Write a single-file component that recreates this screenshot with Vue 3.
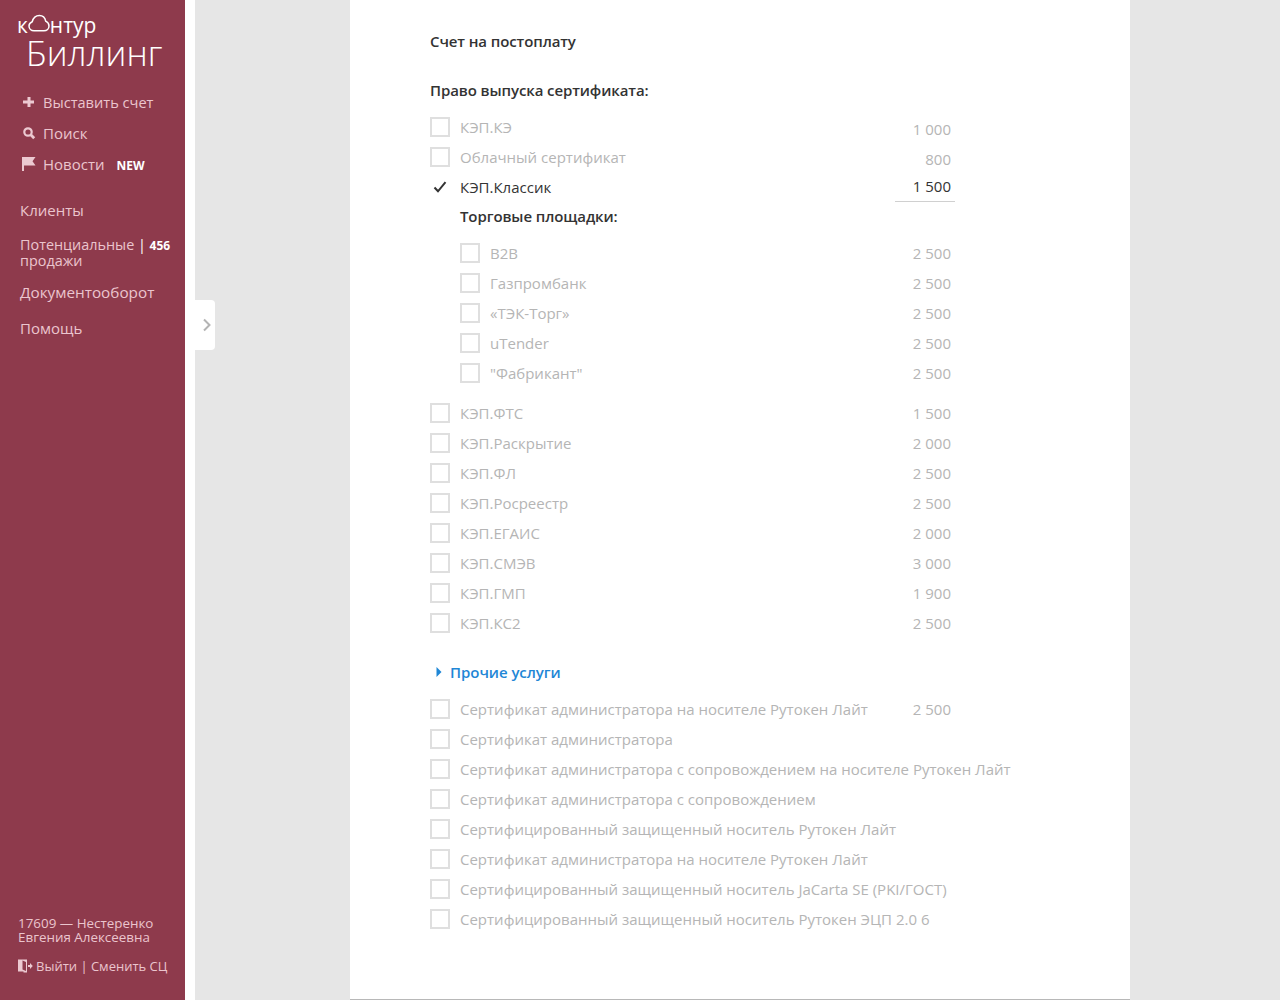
<template>
  <div class="page">
    <aside class="sidebar">
      <div class="sidebar__top">
        <div class="logo">
          <div class="logo__kontur">
            к<svg class="logo__cloud" width="22" height="18" viewBox="0 0 22 18">
              <path d="M6 16.800C3.200 16.800 1 14.700 1 12c0-1.800 1.400-3.400 3.200-4.200C4.900 5.100 7 1.500 11.400 1.500c3.400 0 5.700 2.600 6.300 5.600C19.700 8 21 9.800 21 12c0 2.700-2.200 4.800-5 4.800z" fill="none" stroke="#fff" stroke-width="1.500" />
            </svg>нтур
          </div>
          <div class="logo__product">Биллинг</div>
        </div>
        <nav class="actions">
          <a class="action action--narrow">
            <svg class="action__icon" width="14" height="14" viewBox="0 0 14 14">
              <path d="M5.500 2h3v3.500H12v3H8.500V12h-3V8.500H1v-3h4.500z" fill="#ecc9d1" />
            </svg>
            Выставить счет
          </a>
          <a class="action">
            <svg class="action__icon" width="14" height="14" viewBox="0 0 14 14">
              <circle cx="6" cy="6" r="3.700" fill="none" stroke="#ecc9d1" stroke-width="2.200" />
              <path d="M8.800 8.800l3.400 3.400" stroke="#ecc9d1" stroke-width="2.800" />
            </svg>
            Поиск
          </a>
          <a class="action">
            <svg class="action__icon" width="14" height="16" viewBox="0 0 14 16">
              <path d="M0 1h13.500l-3 4.200 3 4.300H2V15H0z" fill="#ecc9d1" />
            </svg>
            Новости <b class="action__new">NEW</b>
          </a>
        </nav>
        <nav class="menu">
          <a class="menu__item">Клиенты</a>
          <a class="menu__item menu__item--double">
            Потенциальные <span class="menu__sep">|</span> <b class="menu__count">456</b><br />продажи
          </a>
          <a class="menu__item menu__item--wide">Документооборот</a>
          <a class="menu__item menu__item--last">Помощь</a>
        </nav>
      </div>
      <div class="sidebar__bottom">
        <div class="user">17609 — Нестеренко<br />Евгения Алексеевна</div>
        <div class="logout">
          <svg width="15" height="14" viewBox="0 0 15 14">
            <path d="M0 .5h9v13H5.500v-1H0z" fill="#ecc9d1" />
            <path d="M4.500 1.500L8 3v9l-3.500-1.500z" fill="#8e3a4c" />
            <path d="M10 6h2V4l2.800 3-2.800 3V8h-2z" fill="#ecc9d1" />
          </svg>
          Выйти | Сменить СЦ
        </div>
      </div>
    </aside>

    <main class="content">
      <div class="toggle">
        <svg width="10" height="14" viewBox="0 0 10 14">
          <path d="M2 1.500L7.500 7 2 12.500" fill="none" stroke="#b4b4b4" stroke-width="2" />
        </svg>
      </div>
      <section class="sheet">
        <h2 class="sheet__title">Счет на постоплату</h2>
        <h3 class="sheet__subtitle">Право выпуска сертификата:</h3>

        <div class="list list--first">
          <div v-for="item in topItems" :key="item.name" class="row" :class="{ 'row--on': item.checked }">
            <span class="box" :class="{ 'box--on': item.checked }">
              <svg v-if="item.checked" width="14" height="12" viewBox="0 0 14 12">
                <path d="M1.500 6.500L5 10.300 12.500 1.200" fill="none" stroke="#333" stroke-width="2" />
              </svg>
            </span>
            <span class="row__name">{{ item.name }}</span>
            <span class="row__price" :class="{ 'row__price--edit': item.checked, 'row__price--low': item.low }">{{ item.price }}</span>
          </div>
        </div>

        <div class="group">
          <h4 class="group__title">Торговые площадки:</h4>
          <div v-for="item in platforms" :key="item.name" class="row">
            <span class="box"></span>
            <span class="row__name">{{ item.name }}</span>
            <span class="row__price">{{ item.price }}</span>
          </div>
        </div>

        <div class="list list--certs">
          <div v-for="item in certs" :key="item.name" class="row">
            <span class="box"></span>
            <span class="row__name">{{ item.name }}</span>
            <span class="row__price">{{ item.price }}</span>
          </div>
        </div>

        <a class="more">
          <svg width="6" height="10" viewBox="0 0 6 10"><path d="M.5 0L5.500 5 .5 10z" fill="#1f87d6" /></svg>
          Прочие услуги
        </a>

        <div class="list">
          <div v-for="(item, i) in others" :key="i" class="row">
            <span class="box"></span>
            <span class="row__name">{{ item.name }}</span>
            <span v-if="item.price" class="row__price">{{ item.price }}</span>
          </div>
        </div>
      </section>
    </main>
  </div>
</template>

<script setup>
const topItems = [
  { name: "КЭП.КЭ", price: "1 000", low: true },
  { name: "Облачный сертификат", price: "800", low: true },
  { name: "КЭП.Классик", price: "1 500", checked: true },
];

const platforms = [
  { name: "B2B", price: "2 500" },
  { name: "Газпромбанк", price: "2 500" },
  { name: "«ТЭК-Торг»", price: "2 500" },
  { name: "uTender", price: "2 500" },
  { name: '"Фабрикант"', price: "2 500" },
];

const certs = [
  { name: "КЭП.ФТС", price: "1 500" },
  { name: "КЭП.Раскрытие", price: "2 000" },
  { name: "КЭП.ФЛ", price: "2 500" },
  { name: "КЭП.Росреестр", price: "2 500" },
  { name: "КЭП.ЕГАИС", price: "2 000" },
  { name: "КЭП.СМЭВ", price: "3 000" },
  { name: "КЭП.ГМП", price: "1 900" },
  { name: "КЭП.КС2", price: "2 500" },
];

const others = [
  { name: "Сертификат администратора на носителе Рутокен Лайт", price: "2 500" },
  { name: "Сертификат администратора" },
  { name: "Сертификат администратора с сопровождением на носителе Рутокен Лайт" },
  { name: "Сертификат администратора с сопровождением" },
  { name: "Сертифицированный защищенный носитель Рутокен Лайт" },
  { name: "Сертификат администратора на носителе Рутокен Лайт" },
  { name: "Сертифицированный защищенный носитель JaCarta SE (PKI/ГОСТ)" },
  { name: "Сертифицированный защищенный носитель Рутокен ЭЦП 2.0 6" },
];
</script>

<style scoped>
.page {
  display: flex;
  height: 1000px;
  overflow: hidden;
  background-color: #fff;
  font-family: "Open Sans", "Noto Sans", sans-serif;
  font-size: 15px;
  color: #333;
}
.sidebar {
  width: 185px;
  flex-shrink: 0;
  box-sizing: border-box;
  background-color: #8e3a4c;
  color: #ebc5ce;
  display: flex;
  flex-direction: column;
  justify-content: space-between;
  padding: 13px 0 26px;
}
.logo {
  padding-left: 17px;
  color: #fff;
}
.logo__kontur {
  font-size: 21px;
  line-height: 24px;
  display: flex;
  align-items: center;
}
.logo__cloud {
  margin: -5px 0 0 0;
}
.logo__product {
  font-size: 34.8px;
  font-weight: 300;
  line-height: 32px;
  padding-left: 9px;
}
.actions {
  margin-top: 17px;
  padding-left: 22px;
}
.action {
  display: flex;
  align-items: center;
  height: 31px;
  gap: 7px;
}
.action--narrow {
  font-size: 14.6px;
}
.action__icon {
  flex-shrink: 0;
}
.action__new {
  color: #fff;
  font-size: 12px;
  margin: 4px 0 0 5px;
}
.menu {
  margin-top: 23px;
  padding-left: 20px;
  display: flex;
  flex-direction: column;
  gap: 17px;
}
.menu__item {
  line-height: 16px;
  white-space: nowrap;
}
.menu__item--double {
  font-size: 14.4px;
  margin-top: 2px;
}
.menu__item--wide {
  font-size: 15.3px;
  margin-top: -2px;
}
.menu__item--last {
  margin-top: 3px;
}
.menu__sep {
  color: #fff;
  line-height: 1;
}
.menu__count {
  color: #fff;
  font-size: 12px;
  line-height: 1;
}
.sidebar__bottom {
  padding-left: 18px;
  font-size: 13.4px;
}
.user {
  line-height: 14px;
}
.logout {
  display: flex;
  align-items: center;
  gap: 3px;
  margin-top: 14px;
  line-height: 16px;
  font-size: 13px;
}
.content {
  flex: 1;
  position: relative;
  margin-left: 10px;
  background-color: #e6e6e6;
  padding-left: 155px;
}
.toggle {
  position: absolute;
  left: 0;
  top: 300px;
  width: 20px;
  height: 50px;
  background-color: #fff;
  border-radius: 0 4px 4px 0;
  display: flex;
  align-items: center;
  justify-content: center;
  padding-left: 3px;
  box-sizing: border-box;
}
.sheet {
  width: 780px;
  height: 1000px;
  box-sizing: border-box;
  background-color: #fff;
  border-bottom: 1px solid #b8b8b8;
  padding: 31px 0 0 80px;
}
.sheet__title,
.sheet__subtitle,
.group__title {
  margin: 0;
  font-size: 15px;
  font-weight: 600;
  line-height: 20px;
  letter-spacing: -0.1px;
}
.sheet__subtitle {
  margin-top: 29px;
}
.list--first {
  margin-top: 12px;
}
.row {
  width: 525px;
  height: 30px;
  display: flex;
  align-items: center;
  color: #b5b5b5;
  white-space: nowrap;
}
.row--on {
  color: #333;
}
.box {
  width: 20px;
  height: 20px;
  box-sizing: border-box;
  border: 2px solid #dfdfdf;
  margin-right: 10px;
  flex-shrink: 0;
  display: flex;
  align-items: center;
  justify-content: center;
}
.box--on {
  border-color: transparent;
}
.row__name {
  flex: 1;
  padding-bottom: 1px;
}
.row__price {
  width: 60px;
  box-sizing: border-box;
  padding: 0 4px 1px 0;
  text-align: right;
  flex-shrink: 0;
}
.row__price--low {
  padding: 3px 4px 0 0;
}
.row__price--edit {
  height: 29px;
  padding-bottom: 0;
  line-height: 27px;
  border-bottom: 1px solid #d0d0d0;
  margin-bottom: -1px;
}
.group {
  padding-left: 30px;
  width: 495px;
}
.group .row {
  width: 495px;
}
.group__title {
  line-height: 28px;
  margin-bottom: 8px;
}
.list--certs {
  margin-top: 10px;
}
.more {
  display: flex;
  align-items: center;
  gap: 8px;
  margin: 19px 0 7px 6px;
  height: 30px;
  padding-bottom: 1px;
  box-sizing: border-box;
  color: #1f87d6;
  font-weight: 600;
  letter-spacing: -0.05px;
}
</style>
